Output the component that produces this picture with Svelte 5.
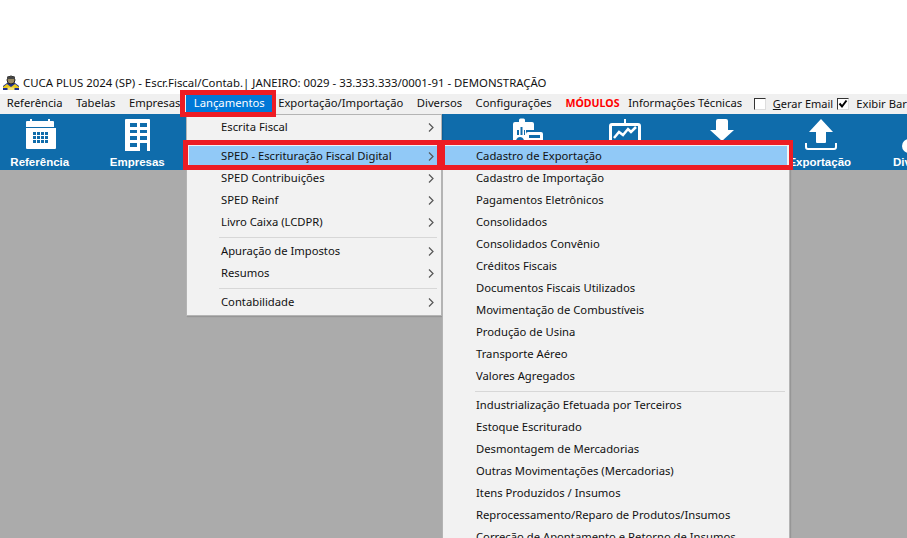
<script>
  const menuBar = ['Referência', 'Tabelas', 'Empresas', 'Lançamentos', 'Exportação/Importação', 'Diversos', 'Configurações'];
  const first = [
    [{ t: 'Escrita Fiscal' }],
    [{ t: 'SPED - Escrituração Fiscal Digital', on: true }, { t: 'SPED Contribuições' }, { t: 'SPED Reinf' }, { t: 'Livro Caixa (LCDPR)' }],
    [{ t: 'Apuração de Impostos' }, { t: 'Resumos' }],
    [{ t: 'Contabilidade' }]
  ];
  const second = [
    ['Cadastro de Exportação', 'Cadastro de Importação', 'Pagamentos Eletrônicos', 'Consolidados', 'Consolidados Convênio', 'Créditos Fiscais', 'Documentos Fiscais Utilizados', 'Movimentação de Combustíveis', 'Produção de Usina', 'Transporte Aéreo', 'Valores Agregados'],
    ['Industrialização Efetuada por Terceiros', 'Estoque Escriturado', 'Desmontagem de Mercadorias', 'Outras Movimentações (Mercadorias)', 'Itens Produzidos / Insumos', 'Reprocessamento/Reparo de Produtos/Insumos', 'Correção de Apontamento e Retorno de Insumos']
  ];
  const tools = ['Referência', 'Empresas', 'Tabelas', 'Lançamentos', 'Livros', 'Relatórios', 'Gráficos', 'Importação', 'Exportação', 'Diversos'];
</script>

<div class="page">
  <div class="title">
    <svg class="logo" width="16" height="16" viewBox="0 0 16 16">
      <path d="M0 15v-4l4-3h8l4 3v4z" fill="#1d2f8c" />
      <path d="M0 12l4-3 4 3 4-3 4 3v1H0z" fill="#e8c81e" />
      <circle cx="8" cy="5" r="4" fill="#9a8a62" stroke="#222" />
      <path d="M4 4V1.500h8V4z" fill="#444" />
      <rect x="4.500" y="12.500" width="7" height="2.500" fill="#f4e27a" />
    </svg>
    <span>CUCA PLUS 2024 (SP) - Escr.Fiscal/Contab.| JANEIRO: 0029 - 33.333.333/0001-91 - DEMONSTRAÇÃO</span>
  </div>

  <nav class="menubar">
    {#each menuBar as m}
      <span class="top" class:active={m === 'Lançamentos'}>{m}</span>
    {/each}
    <span class="top modulos">MÓDULOS</span>
    <span class="top">Informações Técnicas</span>
    <label class="check"><i class="box"></i><span class="narrow"><u>G</u>erar Email</span></label>
    <label class="check tight">
      <i class="box"><svg width="10" height="10" viewBox="0 0 10 10"><path d="M1.500 4.500l2.500 3L8.500 1.500" fill="none" stroke="#000" stroke-width="2" /></svg></i>
      <span>Exibir Barra de Ferramentas</span>
    </label>
  </nav>

  <div class="toolbar">
    {#each tools as tool, i}
      <div class="tool">
        <svg class="ico" width="40" height="36" viewBox="0 0 40 36" fill="#fff">
          {#if i === 0}
            <path d="M7 4h3V2h2v2h16V2h2v2h3a1 1 0 0 1 1 1v5H6V5a1 1 0 0 1 1-1z" />
            <path fill-rule="evenodd" d="M6 11h30v20a1 1 0 0 1-1 1H7a1 1 0 0 1-1-1zM13 15v3h3v-3zm4 0v3h3v-3zm4 0v3h3v-3zm4 0v3h3v-3zM13 19v3h3v-3zm4 0v3h3v-3zm4 0v3h3v-3zm4 0v3h3v-3zM13 23v3h3v-3zm4 0v3h3v-3zm4 0v3h3v-3zm4 0v3h3v-3z" />
          {:else if i === 1}
            <path fill-rule="evenodd" d="M9 2h23a1 1 0 0 1 1 1v31H8V3a1 1 0 0 1 1-1zM13 6v4h7V6zm10 0v4h7V6zM13 13v3h7v-3zm10 0v3h7v-3zM13 19v4h7v-4zm10 0v4h7v-4zM13 26v4h7v-4zm10 0v8h7v-8z" />
          {:else if i === 5}
            <path fill-rule="evenodd" d="M8 5h4V3a1.500 1.500 0 0 1 1.500-1.500h3A1.500 1.500 0 0 1 18 3v2h7a2 2 0 0 1 2 2v6h-8v17H8a2 2 0 0 1-2-2V7a2 2 0 0 1 2-2zM10 18l2 0v-5h-2zm3.500 0h2v-8h-2zm3.500 0h1v-5h-1zM13 20a4 4 0 1 0 .1 0z" />
            <path fill-rule="evenodd" d="M21 15h13a2 2 0 0 1 2 2v14H19V17a2 2 0 0 1 2-2zm1 3v3h11v-3zm0 5v2h2v-2zm4 0v2h3v-2zm5 0v2h2v-2zm-9 4v2h2v-2zm4 0v2h3v-2zm5 0v2h2v-2z" />
          {:else if i === 6}
            <path fill-rule="evenodd" d="M7 6h12V2h2v4h12a3 3 0 0 1 3 3v17a3 3 0 0 1-3 3H7a3 3 0 0 1-3-3V9a3 3 0 0 1 3-3zm0 3v17h26V9z" />
            <path d="M9 21l5-6 4 3 5-6 3 3 5-5" fill="none" stroke="#fff" stroke-width="2.500" />
          {:else if i === 7}
            <path d="M16 2h8a2 2 0 0 1 2 2v9h6L20 24 8 13h6V4a2 2 0 0 1 2-2z" />
          {:else if i === 8}
            <path d="M21 2l12 13h-7v10a1 1 0 0 1-1 1h-8a1 1 0 0 1-1-1V15H9z" />
            <path d="M6 26v4a2 2 0 0 0 2 2h26a2 2 0 0 0 2-2v-4" fill="none" stroke="#fff" stroke-width="2" />
          {:else if i === 9}
            <circle cx="12" cy="29" r="7" />
          {:else}
            <rect x="8" y="4" width="24" height="26" />
          {/if}
        </svg>
        <span class="label">{tool}</span>
      </div>
    {/each}
  </div>

  <div class="desk"></div>

  <div class="menu one">
    {#each first as group, g}
      {#if g > 0}<div class="sep"></div>{/if}
      {#each group as item}
        <div class="row" class:on={item.on}>
          <span class="txt">{item.t}</span>
          <svg class="arrow" width="6" height="9" viewBox="0 0 6 9"><path d="M1 .5l4 4-4 4" fill="none" stroke="#555" stroke-width="1.2" /></svg>
        </div>
      {/each}
    {/each}
  </div>

  <div class="menu two">
    {#each second as group, g}
      {#if g > 0}<div class="sep"></div>{/if}
      {#each group as item}
        <div class="row" class:on={item === 'Cadastro de Exportação'}><span class="txt">{item}</span></div>
      {/each}
    {/each}
  </div>

  <div class="mark m1"></div>
  <div class="mark m2"></div>
  <div class="mark m3"></div>
</div>

<style>
  :global(body) { margin: 0; background: #fff; }
  .page {
    position: relative;
    width: 907px;
    height: 538px;
    overflow: hidden;
    display: flex;
    flex-direction: column;
    font: 11.25px/16px "Noto Sans", sans-serif;
    color: #111;
    background: #fff;
  }
  .title {
    box-sizing: border-box;
    margin-top: 73px;
    height: 21px;
    padding: 0 0 2px 3px;
    display: flex;
    align-items: center;
    gap: 4px;
    white-space: nowrap;
    font-size: 11.4px;
  }
  .logo { flex: none; }
  .menubar {
    height: 20px;
    background: #f0f0f0;
    display: flex;
    align-items: center;
    white-space: nowrap;
  }
  .top { padding: 0 6.7px; line-height: 18px; height: 20px; }
  .top.active { background: #0078d7; color: #fff; padding: 0 7.7px; margin: 0 -1px; }
  .modulos { color: #f00; font-weight: 700; font-size: 10.6px; padding: 0 2px 0 7px; }
  .check { display: flex; align-items: center; gap: 7px; margin-left: 5px; }
  .narrow { font-size: 11px; }
  .tight { margin-left: 4px; }
  .box {
    box-sizing: border-box;
    width: 12px;
    height: 12px;
    border: 1px solid #ddd;
    border-top-color: #333;
    border-left-color: #333;
    background: #fff;
    display: block;
    flex: none;
  }
  .box svg { display: block; }
  .toolbar {
    height: 56px;
    background: #0f6cab;
    display: flex;
  }
  .tool {
    flex: none;
    width: 97.5px;
    display: flex;
    flex-direction: column;
    align-items: center;
    position: relative;
    left: -9px;
  }
  .ico { margin-top: 3px; height: 36px; }
  .label { color: #fff; font: 700 11.5px/14px "Liberation Sans", sans-serif; white-space: nowrap; margin-top: 2px; }
  .desk { flex: 1; background: #ababab; }
  .menu {
    position: absolute;
    background: #f2f2f2;
    border: 1px solid #b4b4b4;
    box-sizing: border-box;
    box-shadow: 1px 1px 1px rgba(0, 0, 0, .12);
    padding: 2px;
  }
  .one { left: 186px; top: 114px; width: 256px; height: 202px; }
  .two { left: 442px; top: 143px; width: 348px; height: 420px; }
  .row {
    box-sizing: border-box;
    height: 22px;
    padding-bottom: 2px;
    display: flex;
    align-items: center;
    justify-content: space-between;
    white-space: nowrap;
  }
  .one .txt { padding-left: 32px; }
  .two .txt { padding-left: 31px; }
  .arrow { margin-right: 5px; margin-top: 1px; }
  .row.on { background: #91c9f7; }
  .sep { height: 1px; margin: 3px 2px 3px 30px; background: #d7d7d7; }
  .mark { position: absolute; box-sizing: border-box; border: 5px solid #ed1c24; }
  .m1 { left: 180px; top: 90px; width: 96px; height: 27px; border-right-width: 4px; }
  .m2 { left: 183px; top: 140px; width: 259px; height: 30px; }
  .m3 { left: 440px; top: 140px; width: 353px; height: 30px; border-right-width: 4px; }
</style>
